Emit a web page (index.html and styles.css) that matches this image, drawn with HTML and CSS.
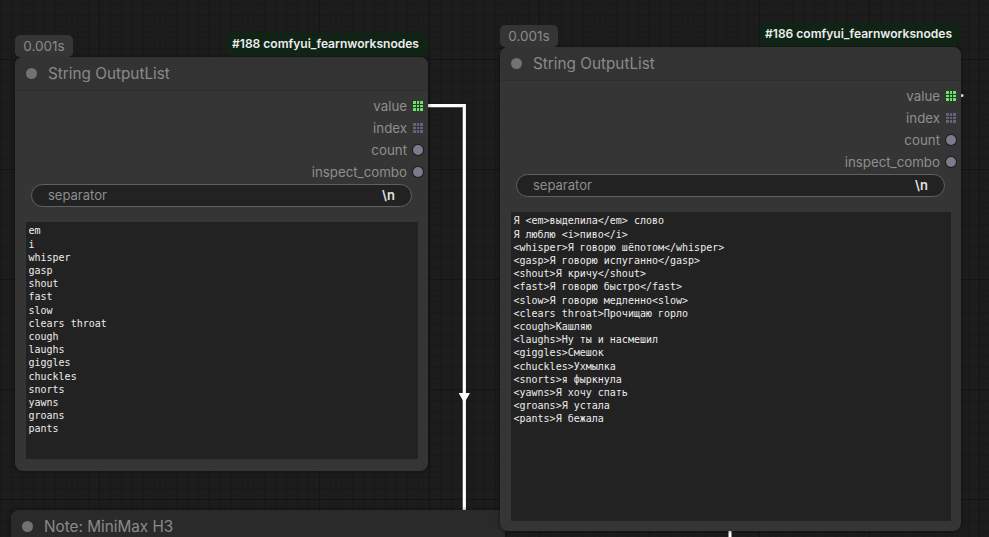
FILE: index.html
```html
<!DOCTYPE html>
<html lang="en">
<head>
    <meta charset="UTF-8">
    <meta name="viewport" content="width=device-width">
    <title>String OutputList</title>
    <link rel="stylesheet" href="styles.css">
</head>
<body>
<div id="canvas">
    <svg class="wires" width="989" height="537" viewBox="0 0 989 537">
        <path d="M428 105.600H464.300V510" fill="none" stroke="#fff" stroke-width="3.200"/>
        <path d="M458.700 393H470L464.300 403Z" fill="#fff"/>
        <path d="M730 531V537" stroke="#fff" stroke-width="3"/>
        <circle cx="962" cy="95.500" r="1.500" fill="#fff"/>
    </svg>

    <div class="node note-node">
        <div class="node-header">
            <span class="dot"></span>
            <span class="node-title">Note: MiniMax H3</span>
        </div>
    </div>

    <div class="node node-left">
        <span class="time-badge">0.001s</span>
        <span class="id-badge">#188 comfyui_fearnworksnodes</span>
        <div class="node-header">
            <span class="dot"></span>
            <span class="node-title">String OutputList</span>
        </div>
        <div class="node-body">
            <ul class="outputs">
                <li>value <span class="slot grid green"><i></i><i></i><i></i><i></i><i></i><i></i><i></i><i></i><i></i></span></li>
                <li>index <span class="slot grid"><i></i><i></i><i></i><i></i><i></i><i></i><i></i><i></i><i></i></span></li>
                <li>count <span class="slot round"></span></li>
                <li>inspect_combo <span class="slot round"></span></li>
            </ul>
            <div class="widget"><span>separator</span><b>\n</b></div>
            <pre class="text-box">em
i
whisper
gasp
shout
fast
slow
clears throat
cough
laughs
giggles
chuckles
snorts
yawns
groans
pants</pre>
        </div>
    </div>

    <div class="node node-right">
        <span class="time-badge">0.001s</span>
        <span class="id-badge">#186 comfyui_fearnworksnodes</span>
        <div class="node-header">
            <span class="dot"></span>
            <span class="node-title">String OutputList</span>
        </div>
        <div class="node-body">
            <ul class="outputs">
                <li>value <span class="slot grid green"><i></i><i></i><i></i><i></i><i></i><i></i><i></i><i></i><i></i></span></li>
                <li>index <span class="slot grid"><i></i><i></i><i></i><i></i><i></i><i></i><i></i><i></i><i></i></span></li>
                <li>count <span class="slot round"></span></li>
                <li>inspect_combo <span class="slot round"></span></li>
            </ul>
            <div class="widget"><span>separator</span><b>\n</b></div>
            <pre class="text-box">Я &lt;em&gt;выделила&lt;/em&gt; слово
Я люблю &lt;i&gt;пиво&lt;/i&gt;
&lt;whisper&gt;Я говорю шёпотом&lt;/whisper&gt;
&lt;gasp&gt;Я говорю испуганно&lt;/gasp&gt;
&lt;shout&gt;Я кричу&lt;/shout&gt;
&lt;fast&gt;Я говорю быстро&lt;/fast&gt;
&lt;slow&gt;Я говорю медленно&lt;slow&gt;
&lt;clears throat&gt;Прочищаю горло
&lt;cough&gt;Кашляю
&lt;laughs&gt;Ну ты и насмешил
&lt;giggles&gt;Смешок
&lt;chuckles&gt;Ухмылка
&lt;snorts&gt;я фыркнула
&lt;yawns&gt;Я хочу спать
&lt;groans&gt;Я устала
&lt;pants&gt;Я бежала</pre>
        </div>
    </div>
</div>
</body>
</html>
```

FILE: styles.css
```css
*{
    margin: 0;
    padding: 0;
    box-sizing: border-box;
}
ul{
    list-style: none;
}
html,body,#canvas{
    width: 100%;
    height: 100%;
    overflow: hidden;
}
#canvas{
    position: relative;
    font-family: Inter, "Liberation Sans", sans-serif;
    background-color: #1c1c1c;
    background-image:
        linear-gradient(#141414 1px, transparent 1px),
        linear-gradient(90deg, #141414 1px, transparent 1px),
        linear-gradient(#181818 1px, transparent 1px),
        linear-gradient(90deg, #181818 1px, transparent 1px);
    background-size: 110px 110px, 110px 110px, 11px 11px, 11px 11px;
    background-position: 99px 59px, 99px 59px, 0 4px, 0 4px;
}
.wires{
    position: absolute;
    left: 0;
    top: 0;
}
.node{
    position: absolute;
    display: flex;
    flex-direction: column;
    background: #353535;
    border-radius: 8px;
    box-shadow: 0 0 4px rgba(0,0,0,.5);
}
.node-left{
    left: 15px;
    top: 57px;
    width: 413px;
    height: 414px;
}
.node-right{
    left: 500px;
    top: 47px;
    width: 461px;
    height: 484px;
}
.note-node{
    left: 11px;
    top: 510px;
    width: 494px;
    height: 60px;
    background: #2a2a2a;
}
.node-header{
    display: flex;
    align-items: center;
    height: 34px;
    flex-shrink: 0;
    padding-left: 11px;
    background: #333;
    border-bottom: 1px solid #2e2e2e;
    border-radius: 8px 8px 0 0;
}
.note-node .node-header{
    height: 32px;
    background: #2a2a2a;
    border-bottom: 0;
}
.dot{
    width: 11px;
    height: 11px;
    border-radius: 50%;
    background: #727272;
}
.node-title{
    margin-left: 11px;
    font-size: 15.300px;
    color: #8a8a8a;
}
.time-badge{
    position: absolute;
    left: 0;
    top: -22px;
    width: 58px;
    height: 22px;
    padding-top: 3px;
    text-align: center;
    font-size: 13.500px;
    color: #8a8a8a;
    background: #353535;
    border-radius: 5px;
}
.id-badge{
    position: absolute;
    right: 2px;
    top: -24px;
    height: 23px;
    padding: 3px 7px 0 5px;
    font-size: 12.050px;
    font-weight: 600;
    color: #ececec;
    background: #0f2414;
    border-radius: 5px;
}
.node-body{
    flex: 1;
    display: flex;
    flex-direction: column;
    min-height: 0;
    padding: 4px 5px 12px 11px;
}
.node-right .node-body{
    padding-bottom: 10px;
}
.outputs{
    display: flex;
    flex-direction: column;
}
.outputs li{
    display: flex;
    justify-content: flex-end;
    align-items: center;
    gap: 6px;
    height: 22px;
    font-size: 13.300px;
    color: #8e8e8e;
}
.slot{
    width: 10px;
    height: 10px;
    flex-shrink: 0;
}
.slot.round{
    border-radius: 50%;
    background: #7b7b8e;
    box-shadow: 0 0 0 1px #1c1c1c;
}
.slot.grid{
    display: grid;
    grid-template-columns: repeat(3, 2.500px);
    grid-auto-rows: 2.500px;
    gap: 1px;
}
.slot.grid i{
    background: #66627c;
}
.slot.grid.green i{
    background: #62e862;
}
.widget{
    display: flex;
    justify-content: space-between;
    align-items: center;
    height: 23px;
    margin: 1px 11px 0 5px;
    padding: 0 16px 1px;
    font-size: 13px;
    color: #8e8e8e;
    background: #222;
    border: 1px solid #616161;
    border-radius: 12px;
}
.widget b{
    font-weight: 600;
    color: #e0e0e0;
}
.text-box{
    flex: 1;
    min-height: 0;
    margin-top: 15px;
    margin-right: 5px;
    padding: 2.400px 2.500px;
    font-family: "DejaVu Sans Mono", monospace;
    font-size: 10px;
    line-height: 13.200px;
    color: #ececec;
    background: #222;
}
```
